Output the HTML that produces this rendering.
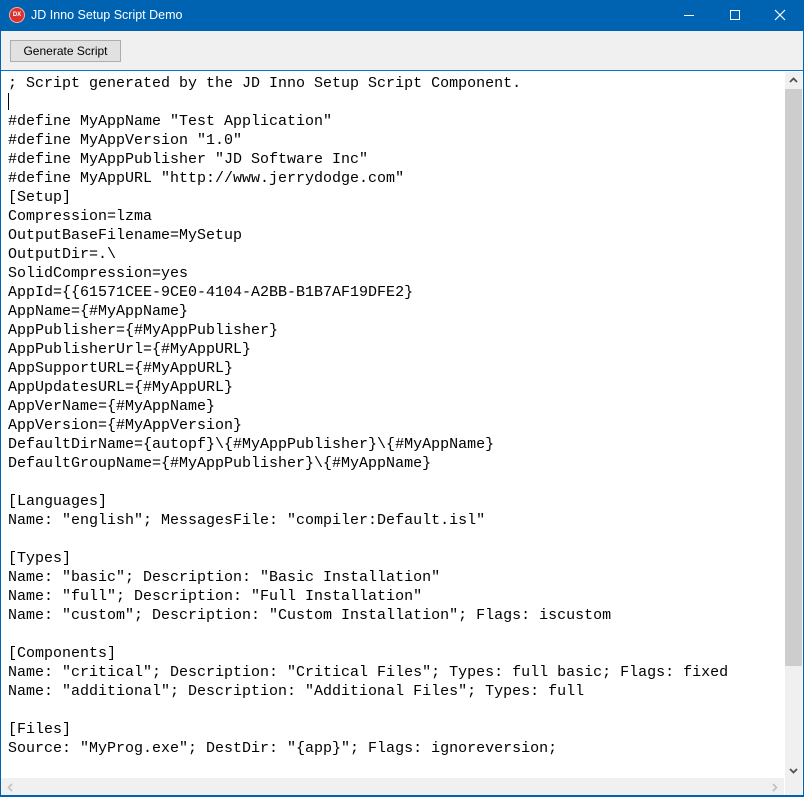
<!DOCTYPE html>
<html><head><style>
body{margin:0;width:804px;height:797px;overflow:hidden;background:#0063b1;position:relative;font-family:"Liberation Sans",sans-serif}
.title{position:absolute;left:0;top:0;width:804px;height:31px;background:#0063b1;color:#fff;font-size:12.5px}
.title .t{position:absolute;left:31px;top:8px}
.icon{position:absolute;left:9px;top:7px;width:16px;height:16px;border-radius:50%;background:#d8332f;box-shadow:inset 0 0 0 1px #f3b0ae;color:#fff;font-size:6px;font-weight:bold;line-height:16px;text-align:center}
.tool{position:absolute;left:1px;top:31px;width:802px;height:39px;background:#f0f0f0}
.btn{position:absolute;left:9px;top:9px;width:109px;height:20px;border:1px solid #adadad;background:#e1e1e1;font-size:12px;text-align:center;line-height:20px;color:#000}
.memo{position:absolute;left:1px;top:70px;width:802px;height:725px;background:#fff;border-top:1px solid #0078d7;box-sizing:border-box}
pre{margin:0;position:absolute;left:7px;top:3px;font-family:"Liberation Mono",monospace;font-size:15px;line-height:19px;color:#000}
.vs{position:absolute;right:1px;top:1px;width:17px;height:707px;background:#f0f0f0}
.thumb{position:absolute;left:0;top:17px;width:17px;height:577px;background:#cdcdcd}
.hs{position:absolute;left:0;top:707px;width:783px;height:17px;background:#f0f0f0}
.cur{position:absolute;left:8px;top:93px;width:1px;height:17px;background:#000}
</style></head><body>
<div class="title"><div class="icon">DX</div><div class="t">JD Inno Setup Script Demo</div>
<svg style="position:absolute;left:680px;top:8px" width="120" height="16">
<line x1="4" y1="7.5" x2="14" y2="7.5" stroke="#fff"/>
<rect x="50.5" y="2.5" width="9" height="9" fill="none" stroke="#fff"/>
<path d="M95 2 L105 12 M105 2 L95 12" stroke="#fff" stroke-width="1.2"/>
</svg></div>
<div class="tool"><div class="btn">Generate Script</div></div>
<div class="memo">
<pre>; Script generated by the JD Inno Setup Script Component.

#define MyAppName "Test Application"
#define MyAppVersion "1.0"
#define MyAppPublisher "JD Software Inc"
#define MyAppURL "http://www.jerrydodge.com"
[Setup]
Compression=lzma
OutputBaseFilename=MySetup
OutputDir=.\
SolidCompression=yes
AppId={{61571CEE-9CE0-4104-A2BB-B1B7AF19DFE2}
AppName={#MyAppName}
AppPublisher={#MyAppPublisher}
AppPublisherUrl={#MyAppURL}
AppSupportURL={#MyAppURL}
AppUpdatesURL={#MyAppURL}
AppVerName={#MyAppName}
AppVersion={#MyAppVersion}
DefaultDirName={autopf}\{#MyAppPublisher}\{#MyAppName}
DefaultGroupName={#MyAppPublisher}\{#MyAppName}

[Languages]
Name: "english"; MessagesFile: "compiler:Default.isl"

[Types]
Name: "basic"; Description: "Basic Installation"
Name: "full"; Description: "Full Installation"
Name: "custom"; Description: "Custom Installation"; Flags: iscustom

[Components]
Name: "critical"; Description: "Critical Files"; Types: full basic; Flags: fixed
Name: "additional"; Description: "Additional Files"; Types: full

[Files]
Source: "MyProg.exe"; DestDir: "{app}"; Flags: ignoreversion;</pre>
<div class="cur" style="top:22px;left:7px"></div>
<div class="vs"><div class="thumb"></div>
<svg style="position:absolute;left:4px;top:5px" width="9" height="6"><path d="M1 5 L4.5 1.5 L8 5" stroke="#505050" stroke-width="1.8" fill="none"/></svg>
<svg style="position:absolute;left:4px;top:696px" width="9" height="6"><path d="M1 1 L4.5 4.5 L8 1" stroke="#505050" stroke-width="1.8" fill="none"/></svg>
</div>
<div class="hs">
<svg style="position:absolute;left:6px;top:5px" width="6" height="9"><path d="M5 1 L1.5 4.5 L5 8" stroke="#c0c0c0" stroke-width="1.6" fill="none"/></svg>
<svg style="position:absolute;left:771px;top:5px" width="6" height="9"><path d="M1 1 L4.5 4.5 L1 8" stroke="#c0c0c0" stroke-width="1.6" fill="none"/></svg>
</div>
<div style="position:absolute;right:1px;top:707px;width:17px;height:17px;background:#f0f0f0"></div>
</div>
</body></html>
